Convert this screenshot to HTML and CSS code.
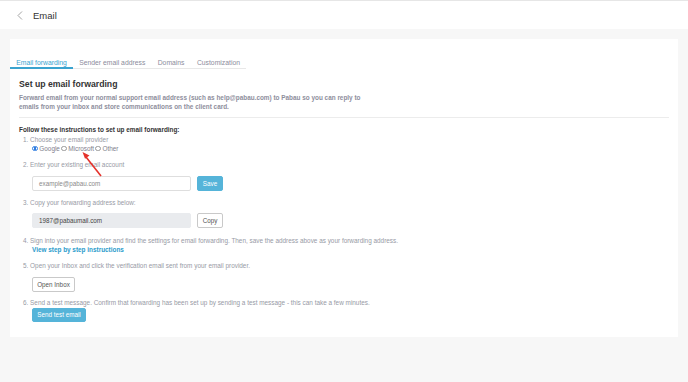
FILE: index.html
```html
<!DOCTYPE html>
<html lang="en">
<head>
    <meta charset="UTF-8">
    <title>Email</title>
    <link rel="stylesheet" href="styles.css">
</head>
<body>
    <div class="topbar">
        <svg class="back" width="6" height="9" viewBox="0 0 6 9"><path d="M5 0.5 L1 4.5 L5 8.5" fill="none" stroke="#9a9a9a" stroke-width="0.9"/></svg>
        <span class="page-title">Email</span>
    </div>
    <div class="page">
        <div class="card">
            <div class="tabs">
                <div class="tab active">Email forwarding</div>
                <div class="tab">Sender email address</div>
                <div class="tab">Domains</div>
                <div class="tab">Customization</div>
            </div>
            <div class="content">
                <h2>Set up email forwarding</h2>
                <p class="intro">Forward email from your normal support email address (such as help@pabau.com) to Pabau so you can reply to emails from your inbox and store communications on the client card.</p>
                <div class="divider"></div>
                <div class="steps-title">Follow these instructions to set up email forwarding:</div>
                <ol class="steps">
                    <li>
                        Choose your email provider
                        <div class="providers">
                            <label><span class="radio checked"></span>Google</label>
                            <label><span class="radio"></span>Microsoft</label>
                            <label><span class="radio"></span>Other</label>
                        </div>
                    </li>
                    <li>
                        Enter your existing email account
                        <div class="field-row">
                            <div class="input placeholder">example@pabau.com</div>
                            <button class="btn primary">Save</button>
                        </div>
                    </li>
                    <li class="wide-gap">
                        Copy your forwarding address below:
                        <div class="field-row">
                            <div class="input disabled">1987@pabaumail.com</div>
                            <button class="btn">Copy</button>
                        </div>
                    </li>
                    <li>
                        Sign into your email provider and find the settings for email forwarding. Then, save the address above as your forwarding address.
                        <a class="link" href="#">View step by step instructions</a>
                    </li>
                    <li class="tight-gap">
                        Open your Inbox and click the verification email sent from your email provider.
                        <div class="btn-row"><button class="btn inbox">Open Inbox</button></div>
                    </li>
                    <li class="last">
                        Send a test message. Confirm that forwarding has been set up by sending a test message - this can take a few minutes.
                        <div><button class="btn primary send">Send test email</button></div>
                    </li>
                </ol>
            </div>
            <svg class="arrow" width="24" height="28" viewBox="0 0 24 28">
                <path d="M20 26 L5 7" stroke="#e5322b" stroke-width="1.6" fill="none"/>
                <path d="M1.5 2 L8.5 5.5 L4 8.8 Z" fill="#e5322b"/>
            </svg>
        </div>
    </div>
</body>
</html>
```

FILE: styles.css
```css
body {
    margin: 0;
    font-family: 'Liberation Sans', Arial, sans-serif;
    background-color: #f7f7f7;
    color: #333;
}
.topbar {
    height: 28px;
    border-top: 1px solid #e6e6e6;
    background-color: white;
    display: flex;
    align-items: center;
    padding-left: 17px;
    gap: 10px;
}
.page-title {
    font-size: 9.5px;
    color: #333;
}
.page {
    padding: 10px 10px 0 10px;
}
.card {
    position: relative;
    background-color: white;
    height: 298px;
}
.tabs {
    display: inline-flex;
    padding-top: 20px;
    border-bottom: 1px solid #e8e8e8;
}
.tab {
    font-size: 6.8px;
    line-height: 8px;
    white-space: nowrap;
    color: #8c8c9c;
    padding: 0 6.2px;
    border-bottom: 2px solid transparent;
    margin-bottom: -1px;
}
.tab.active {
    color: #3aa3cf;
    border-bottom-color: #3aa3cf;
}
.content {
    padding: 0 9px;
}
h2 {
    font-size: 8.7px;
    line-height: 11px;
    font-weight: bold;
    color: #333;
    margin: 10px 0 2.5px 0;
}
.intro {
    font-size: 6.4px;
    font-weight: bold;
    color: #8e8e9c;
    line-height: 9.5px;
    margin: 0;
    width: 352px;
}
.divider {
    height: 1px;
    background-color: #ececec;
    margin: 5.5px 0 6.5px 0;
}
.steps-title {
    font-size: 6.4px;
    font-weight: bold;
    color: #333;
    line-height: 9px;
}
.steps {
    margin: 1.5px 0 0 0;
    padding: 0 0 0 4px;
    list-style-position: inside;
    font-size: 6.4px;
    color: #979aa5;
    line-height: 9px;
}
.steps li {
    margin-bottom: 7px;
}
.steps li.wide-gap {
    margin-bottom: 7.5px;
}
.steps li.tight-gap {
    margin-bottom: 6px;
}
.steps li.last {
    margin-bottom: 0;
}
.providers {
    display: flex;
    gap: 1px;
    padding-left: 9px;
    color: #80808c;
    line-height: 9px;
}
.providers label {
    display: flex;
    align-items: center;
    gap: 1.5px;
}
.radio {
    width: 3.8px;
    height: 3.8px;
    border: 0.7px solid #999;
    border-radius: 50%;
    display: inline-block;
}
.radio.checked {
    border-color: #2f7de1;
    background: radial-gradient(circle, #2f7de1 55%, white 60%);
}
.field-row {
    display: flex;
    gap: 6px;
    margin: 6.5px 0 0 9px;
}
.input {
    width: 151px;
    height: 13px;
    border: 1px solid #dedede;
    border-radius: 2px;
    font-size: 6.3px;
    line-height: 13px;
    padding-left: 6px;
    color: #555;
}
.input.placeholder {
    color: #8a8a8a;
}
.input.disabled {
    background-color: #e9ebee;
    border-color: #e9ebee;
    color: #444;
}
.btn {
    font-family: inherit;
    font-size: 6.3px;
    height: 15px;
    width: 26px;
    padding: 0;
    border: 1px solid #c9c9c9;
    border-radius: 2px;
    background-color: white;
    color: #555;
}
.btn.primary {
    background-color: #55b4d9;
    border-color: #55b4d9;
    color: white;
}
.link {
    display: block;
    padding-left: 9px;
    color: #2a9bcb;
    font-weight: bold;
    text-decoration: none;
}
.btn-row {
    margin: 7px 0 0 9px;
    display: flex;
}
.btn.inbox {
    width: 43px;
    height: 15px;
}
.btn.send {
    display: block;
    width: 54px;
    height: 14px;
    margin: 1px 0 0 9px;
}
.arrow {
    position: absolute;
    left: 71px;
    top: 111px;
}
```
